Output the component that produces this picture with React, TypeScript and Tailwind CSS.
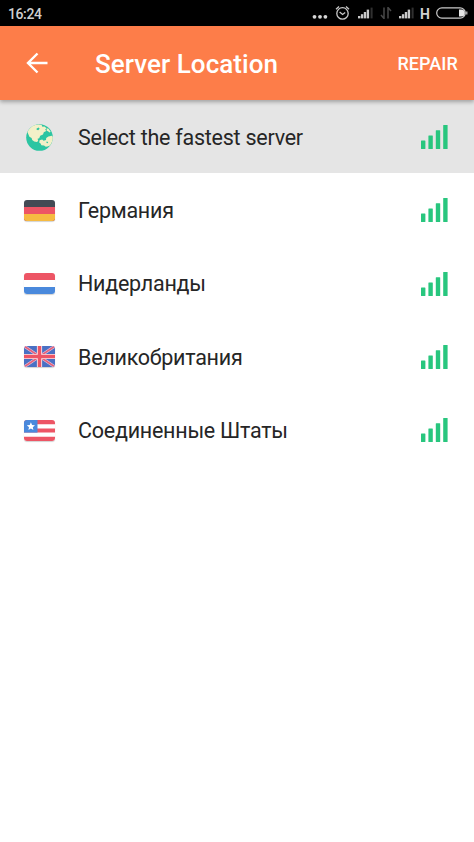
import type { ReactNode } from 'react';

function CellSignal() {
  return (
    <svg width="16" height="12" viewBox="0 0 16 12" fill="#c9c9c9">
      <rect x="0" y="9" width="2.4" height="2.4" />
      <rect x="2.9" y="7.2" width="2.4" height="4.2" />
      <rect x="5.8" y="5" width="2.4" height="6.4" />
      <rect x="8.7" y="2.6" width="2.4" height="8.8" />
      <rect x="12.6" y="0.6" width="2" height="10.8" fill="#303030" />
    </svg>
  );
}

function StatusBar() {
  return (
    <div className="flex h-[26px] items-center bg-black pl-2 pr-[6px] text-[#d0d0d0]">
      <span className="mt-px text-[14px] font-medium leading-none tracking-[-0.4px]">16:24</span>
      <div className="ml-auto flex items-center">
        <svg width="16" height="14" viewBox="0 0 16 14" fill="#d6d6d6" className="mr-[7px]">
          <circle cx="2.5" cy="10.8" r="1.9" />
          <circle cx="8" cy="10.8" r="1.9" />
          <circle cx="13.4" cy="10.8" r="1.9" />
        </svg>
        <svg width="15" height="16" viewBox="0 0 15 16" fill="none" stroke="#c9c9c9" strokeWidth="1.3" className="mr-[8px]">
          <circle cx="7.5" cy="8.4" r="5.7" />
          <path d="M4.6 7l3 2.4 2.6-2M1 4.2l3-2.6M14 4.2l-3-2.6" />
        </svg>
        <CellSignal />
        <svg width="12" height="12" viewBox="0 0 12 12" fill="none" stroke="#484848" strokeWidth="1.5" className="ml-[6px] mr-[7px]">
          <path d="M4 .5v11L1 8M8 11.5V.5L11 4" />
        </svg>
        <CellSignal />
        <span className="ml-[5px] mr-[6px] mt-px w-[10px] text-center text-[14px] font-bold leading-none">H</span>
        <svg width="32" height="12" viewBox="0 0 32 12" fill="none">
          <rect x=".7" y=".8" width="28.6" height="10.4" rx="5.2" stroke="#c9c9c9" strokeWidth="1.2" />
          <path d="M23 2.4h2.2a3.6 3.6 0 0 1 0 7.2H23z" fill="#e6e6e6" />
          <path d="M30.8 4.4v3.2" stroke="#c9c9c9" strokeWidth="1.2" />
        </svg>
      </div>
    </div>
  );
}

function Globe() {
  return (
    <svg width="27" height="27" viewBox="0 0 27 27">
      <circle cx="13.5" cy="13.5" r="13.3" fill="#2cc5a2" />
      <path
        d="M1.4 8C2.8 4.6 5.6 2 9.2.9l3.4-.4 3 .6.8 1.6 2-.3 2.2 1.8-1.4 1.4 1 1.4-2.4 1.2-.8 2.4-2.8 1.2-1 2.4-1.6.6.6 2.2-1.4 1-2.6-.4-2-1.6-.6-2-2.2-1.2z"
        fill="#f3f0c8"
      />
      <path
        d="M13.6 16.2l2.6-.6 1.4 1.2 2.4-.8.2-2 2.2-1.6 3.6-.6.8 1.2c.1 3.4-1 6.6-3.2 8.8l-2.2.6-1.6.4-1.8-1.2-2.6-.4-.8-1.8-1.4-1z"
        fill="#f3f0c8"
      />
      <path d="M20.8 4.2l1.8.6 2 3-1 .8-1.6-1.4-1.4-.4z" fill="#f3f0c8" />
      <path d="M10.6 4.4l2.2-.8.8 1.2-1.4 1.4-1.6-.4zM20.6 17.6l1.6.4-.6 1.2-1.2-.4z" fill="#2cc5a2" />
    </svg>
  );
}

function Flag({ children }: { children: ReactNode }) {
  return (
    <svg
      width="31"
      height="21"
      viewBox="0 0 31 21"
      className="rounded-[3px] shadow-[0_1px_1px_rgba(0,0,0,0.18)]"
    >
      {children}
    </svg>
  );
}

function Germany() {
  return (
    <Flag>
      <rect width="31" height="21" fill="#434a54" />
      <rect y="7" width="31" height="14" fill="#ed5565" />
      <rect y="14" width="31" height="7" fill="#f6bb42" />
    </Flag>
  );
}

function Netherlands() {
  return (
    <Flag>
      <rect width="31" height="21" fill="#fff" />
      <rect width="31" height="7" fill="#ed5565" />
      <rect y="14" width="31" height="7" fill="#4a89dc" />
    </Flag>
  );
}

function UnitedKingdom() {
  return (
    <Flag>
      <rect width="31" height="21" fill="#4a70c4" />
      <path d="M0 0l31 21M31 0L0 21" stroke="#e2c4dc" strokeWidth="2.8" />
      <path d="M0 0l31 21M31 0L0 21" stroke="#e5607a" strokeWidth="1.6" />
      <path d="M15.5 0v21M0 10.5h31" stroke="#f8e6ea" strokeWidth="5.2" />
      <path d="M15.5 0v21M0 10.5h31" stroke="#ed5565" strokeWidth="3.4" />
    </Flag>
  );
}

function UnitedStates() {
  return (
    <Flag>
      <rect width="31" height="21" fill="#fff" />
      <path d="M0 2.1h31M0 10.5h31M0 18.9h31" stroke="#ed5565" strokeWidth="4.2" />
      <rect width="13.5" height="12.6" fill="#4a89dc" />
      <path d="M6.9 2.2l1.2 2.7 2.9.3-2.2 2 .6 2.9-2.5-1.5-2.5 1.5.6-2.9-2.2-2 2.9-.3z" fill="#fff" />
    </Flag>
  );
}

function SignalBars() {
  return (
    <svg width="27" height="24" viewBox="0 0 27 24" fill="#28c67e">
      <rect x="0" y="15.5" width="4.4" height="8.5" rx=".5" />
      <rect x="7.4" y="10.5" width="4.4" height="13.5" rx=".5" />
      <rect x="14.8" y="5.2" width="4.4" height="18.8" rx=".5" />
      <rect x="22.2" y="0" width="4.4" height="24" rx=".5" />
    </svg>
  );
}

const servers = [
  { name: 'Select the fastest server', icon: <Globe />, selected: true },
  { name: 'Германия', icon: <Germany /> },
  { name: 'Нидерланды', icon: <Netherlands /> },
  { name: 'Великобритания', icon: <UnitedKingdom /> },
  { name: 'Соединенные Штаты', icon: <UnitedStates /> },
];

export default function App() {
  return (
    <div className="flex h-screen w-full flex-col overflow-hidden bg-white font-[Roboto,sans-serif]">
      <StatusBar />

      <header className="relative z-10 flex h-[74px] shrink-0 items-center bg-[#fd7d49] pl-[26px] pr-4 text-white shadow-[0_2px_4px_rgba(0,0,0,0.3)]">
        <button aria-label="Back">
          <svg width="22" height="22" viewBox="0 0 22 22" fill="none" stroke="currentColor" strokeWidth="2.4">
            <path d="M21.5 11H2.5M11.5 1.5L2 11l9.5 9.5" />
          </svg>
        </button>
        <h1 className="ml-[47px] mt-[2px] whitespace-nowrap text-[26px] font-medium leading-none tracking-[0.05px]">
          Server Location
        </h1>
        <button className="ml-auto mt-[2px] text-[18px] font-medium leading-none tracking-[0.1px]">REPAIR</button>
      </header>

      <ul>
        {servers.map((server) => (
          <li
            key={server.name}
            className={`flex h-[73.25px] items-center pl-6 pr-[26px] pt-px ${server.selected ? 'bg-[#e5e5e5]' : ''}`}
          >
            <div className="flex w-[31px] shrink-0 justify-center">{server.icon}</div>
            <span className="ml-[23px] mt-px whitespace-nowrap text-[21.5px] leading-none tracking-[-0.25px] text-[#262626]">
              {server.name}
            </span>
            <div className="ml-auto">
              <SignalBars />
            </div>
          </li>
        ))}
      </ul>
    </div>
  );
}
